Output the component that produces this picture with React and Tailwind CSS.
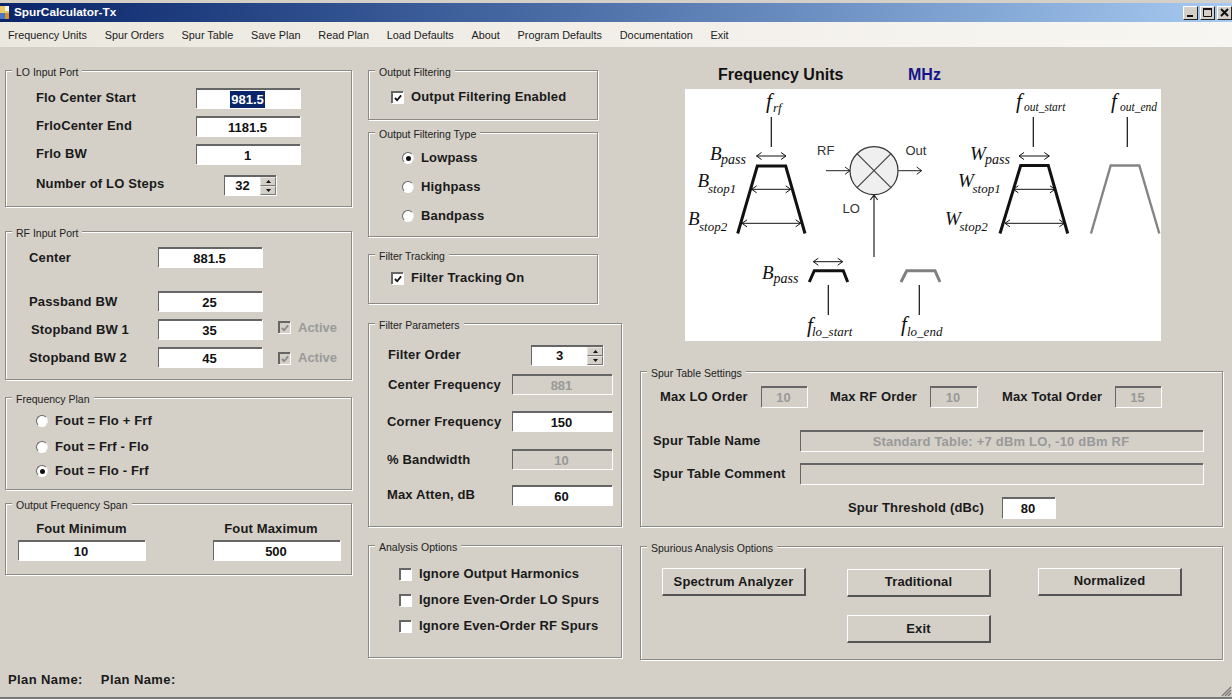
import React from "react";

const Group = ({ title, className = "", children }) => (
  <div className={`relative border border-[#8c8a84] shadow-[1px_1px_0_#fff,inset_1px_1px_0_#fff] ${className}`}>
    <span className="absolute -top-[5px] left-[6px] bg-[#d4d0c8] px-[4px] text-[10.5px] leading-[13px] text-[#222] whitespace-nowrap">{title}</span>
    {children}
  </div>
);

const Field = ({ children, disabled, selected, className = "w-[104px] h-[20px]" }) => (
  <div className={`flex shrink-0 items-center justify-center border-t-2 border-l border-t-[#666] border-l-[#666] pr-[2px] shadow-[1px_1px_0_#fff] text-[13px] font-bold leading-none whitespace-nowrap ${disabled ? "bg-[#d4d0c8] text-[#999]" : "bg-white text-[#111]"} ${className}`}>
    {selected ? <span className="bg-[#0a246a] px-px py-[2px] text-white">{children}</span> : children}
  </div>
);

const Label = ({ children, className = "" }) => (
  <span className={`text-[13px] font-bold leading-[16px] tracking-[0.15px] text-[#1a1a1a] whitespace-nowrap ${className}`}>{children}</span>
);

const Spinner = ({ value, className }) => (
  <div className={`flex shrink-0 h-[20px] items-stretch border-t-2 border-l border-t-[#666] border-l-[#666] bg-white shadow-[1px_1px_0_#fff] ${className}`}>
    <div className="flex flex-1 items-center justify-center text-[13px] font-bold text-[#111]">{value}</div>
    <div className="flex w-[16px] flex-col">
      {[0, 1].map((i) => (
        <div key={i} className="flex flex-1 items-center justify-center border border-[#e8e6e0] border-r-[#777] border-b-[#777] bg-[#d4d0c8]">
          <svg width="5" height="3" viewBox="0 0 5 3">
            <path d={i === 0 ? "M2.5 0L5 3H0Z" : "M0 0H5L2.5 3Z"} fill="#111" />
          </svg>
        </div>
      ))}
    </div>
  </div>
);

const Check = ({ checked, disabled }) => (
  <span className={`flex h-[12px] w-[12px] shrink-0 items-center justify-center border-t-2 border-l-2 border-t-[#666] border-l-[#666] shadow-[1px_1px_0_#fff] ${disabled ? "bg-[#d4d0c8]" : "bg-white"}`}>
    {checked && (
      <svg width="8" height="8" viewBox="0 0 9 9">
        <path d="M1 4.5L3.5 7L8 1.5" fill="none" stroke={disabled ? "#8a8a8a" : "#111"} strokeWidth="2" />
      </svg>
    )}
  </span>
);

const Radio = ({ checked }) => (
  <span className="flex h-[12px] w-[12px] shrink-0 items-center justify-center rounded-full border border-t-[#666] border-l-[#666] border-r-[#eee] border-b-[#fff] bg-white">
    {checked && <span className="h-[5px] w-[5px] rounded-full bg-[#111]" />}
  </span>
);

const Btn = ({ children, className = "" }) => (
  <div className={`flex h-[28px] w-[144px] items-center justify-center border-t border-l border-t-white border-l-white border-r-2 border-b-2 border-r-[#555] border-b-[#555] text-[13px] font-bold tracking-[0.15px] text-[#1a1a1a] ${className}`}>
    {children}
  </div>
);

const Arrow = ({ x1, x2, y }) => (
  <g fill="none" stroke="#111" strokeWidth="1">
    <path d={`M${x1} ${y}H${x2}`} />
    <path d={`M${x1 + 5} ${y - 3.5}L${x1} ${y}L${x1 + 5} ${y + 3.5}`} />
    <path d={`M${x2 - 5} ${y - 3.5}L${x2} ${y}L${x2 - 5} ${y + 3.5}`} />
  </g>
);

const Sym = ({ main, sub, x, y, sx, sy, size = 20, subSize = 14 }) => (
  <g fontFamily="'Liberation Serif', serif" fontStyle="italic" fill="#111">
    <text x={x} y={y} fontSize={size}>{main}</text>
    <text x={sx} y={sy} fontSize={subSize}>{sub}</text>
  </g>
);

const Diagram = () => (
  <svg className="block h-[252px] w-[476px] bg-white" viewBox="685 89 476 252">
    <g fill="none" stroke="#111" strokeLinecap="butt" strokeLinejoin="miter">
      <path d="M737.7 233.5L757.3 166H785.7L805 233.5" strokeWidth="3" />
      <path d="M1000 233.5L1020.7 165.5H1048.3L1067.7 233.5" strokeWidth="3" />
      <path d="M809.3 282L814.3 270.7H843.3L847.7 282" strokeWidth="3" />
      <path d="M771.3 117V147M1033.3 117V147M1127.3 117V147M828.3 285V315M919.3 285V315" strokeWidth="1.2" />
    </g>
    <path d="M901 282L906.7 270.7H935L940 282" fill="none" stroke="#808080" strokeWidth="3" />
    <path d="M1091 233.5L1110.7 165.5H1139.3L1159.3 233.5" fill="none" stroke="#858585" strokeWidth="2.4" />
    <Arrow x1={756.5} x2={786} y={156} />
    <Arrow x1={751.7} x2={790.7} y={189.3} />
    <Arrow x1={742} x2={800.7} y={223.3} />
    <Arrow x1={1019} x2={1049.3} y={156} />
    <Arrow x1={1013.3} x2={1055} y={189.3} />
    <Arrow x1={1005} x2={1064.3} y={223.3} />
    <Arrow x1={813.3} x2={842.7} y={261.7} />
    <circle cx="874" cy="170.7" r="24" fill="#efefef" stroke="#333" strokeWidth="1.2" />
    <path d="M857 153.7L891 187.7M891 153.7L857 187.7" stroke="#444" strokeWidth="1.2" />
    <g fill="none" stroke="#222" strokeWidth="1">
      <path d="M826 170.7H850M845 167L850 170.7L845 174.4" />
      <path d="M898.3 170.7H921.7M916.7 167L921.7 170.7L916.7 174.4" />
      <path d="M874 257V195M870.3 200L874 195L877.7 200" strokeWidth="1.2" />
    </g>
    <g fontFamily="'Liberation Sans', sans-serif" fontSize="13" fill="#333">
      <text x="817" y="155">RF</text>
      <text x="905.5" y="155">Out</text>
      <text x="842.5" y="213">LO</text>
    </g>
    <Sym main="f" sub="rf" x={766} y={108} sx={773} sy={112} size={21} subSize={13} />
    <Sym main="B" sub="pass" x={710} y={159.5} sx={721} sy={163.5} size={19} subSize={14} />
    <Sym main="B" sub="stop1" x={697.5} y={187} sx={708} sy={193} size={19} subSize={13} />
    <Sym main="B" sub="stop2" x={688} y={225} sx={699} sy={231} size={19} subSize={13} />
    <Sym main="B" sub="pass" x={762} y={278.5} sx={773.5} sy={283} size={19} subSize={14} />
    <Sym main="f" sub="lo_start" x={807} y={332} sx={812} sy={336} size={21} subSize={13} />
    <Sym main="f" sub="lo_end" x={901} y={331} sx={907} sy={335.5} size={21} subSize={13} />
    <Sym main="f" sub="out_start" x={1016} y={108} sx={1024} sy={111} size={21} subSize={11.5} />
    <Sym main="f" sub="out_end" x={1111} y={108} sx={1120} sy={111} size={21} subSize={11.5} />
    <Sym main="W" sub="pass" x={970} y={159.5} sx={985} sy={163.5} size={19} subSize={14} />
    <Sym main="W" sub="stop1" x={958} y={187} sx={972.5} sy={192.5} size={19} subSize={13} />
    <Sym main="W" sub="stop2" x={945} y={225} sx={959.5} sy={231} size={19} subSize={13} />
  </svg>
);

const menu = ["Frequency Units", "Spur Orders", "Spur Table", "Save Plan", "Read Plan", "Load Defaults", "About", "Program Defaults", "Documentation", "Exit"];

const WinBtn = ({ children }) => (
  <div className="flex h-[14px] w-[15px] items-center justify-center border-t border-l border-t-white border-l-white border-r border-b border-r-[#222] border-b-[#222] bg-[#d4d0c8]">
    {children}
  </div>
);

export default function App() {
  return (
    <div className="relative flex h-[699px] w-[1232px] flex-col overflow-hidden border-b-2 border-b-[#777] bg-[#d4d0c8] pt-[3px] font-['Liberation_Sans',sans-serif]">
      {/* title bar */}
      <div className="flex h-[19px] shrink-0 items-center bg-gradient-to-r from-[#0a246a] to-[#a6caf0]">
        <svg width="9" height="13" viewBox="0 0 9 13" className="mr-[5px] shrink-0">
          <rect width="9" height="13" fill="#e8c96a" />
          <rect y="7" width="5" height="6" fill="#4a76c8" />
          <rect x="5" y="0" width="4" height="5" fill="#f4f4e8" />
          <rect x="5" y="7" width="4" height="6" fill="#d8902c" />
        </svg>
        <span className="mt-[1px] text-[11.8px] font-bold text-white">SpurCalculator-Tx</span>
        <div className="ml-auto flex gap-[2px]">
          <WinBtn>
            <svg width="9" height="9" viewBox="0 0 9 9"><rect x="1" y="7" width="6" height="2" fill="#111" /></svg>
          </WinBtn>
          <WinBtn>
            <svg width="9" height="9" viewBox="0 0 9 9"><path d="M0.5 1.5H8.5V8.5H0.5Z" fill="none" stroke="#111" /><rect y="0" width="9" height="2" fill="#111" /></svg>
          </WinBtn>
          <WinBtn>
            <svg width="9" height="9" viewBox="0 0 9 9"><path d="M1 1L8 8M8 1L1 8" stroke="#111" strokeWidth="2" /></svg>
          </WinBtn>
        </div>
      </div>
      {/* menu */}
      <div className="flex h-[25px] shrink-0 items-center gap-[17.8px] bg-gradient-to-r from-[#ebe8df] to-[#f8f6f2] pl-[8px] pt-[1px] text-[10.85px] text-[#222]">
        {menu.map((m) => (
          <span key={m} className="whitespace-nowrap">{m}</span>
        ))}
      </div>

      {/* body */}
      <div className="flex pl-[5px] pt-[23px]">
        {/* left */}
        <div className="flex w-[347px] shrink-0 flex-col">
          <Group title="LO Input Port" className="h-[137px] pl-[30px] pt-[17px]">
            {["Flo Center Start", "FrloCenter End", "Frlo BW"].map((l, i) => (
              <div key={l} className="mb-[8px] flex h-[20px] items-center">
                <Label className="w-[160px] -mt-[1px] shrink-0">{l}</Label>
                <Field selected={i === 0}>{["981.5", "1181.5", "1"][i]}</Field>
              </div>
            ))}
            <div className="mt-[11px] flex h-[20px] items-center">
              <Label className="w-[188px] -mt-[3px] shrink-0">Number of LO Steps</Label>
              <Spinner value="32" className="w-[52px]" />
            </div>
          </Group>

          <Group title="RF Input Port" className="mt-[24px] h-[149px] pl-[23px] pt-[15px]">
            <div className="flex h-[20px] items-center">
              <Label className="w-[129px] mt-[1px] shrink-0">Center</Label>
              <Field>881.5</Field>
            </div>
            <div className="mt-[24px] flex h-[20px] items-center">
              <Label className="w-[129px] mt-[1px] shrink-0">Passband BW</Label>
              <Field>25</Field>
            </div>
            <div className="mt-[8px] flex h-[20px] items-center">
              <Label className="w-[129px] mt-[1px] pl-[2px] shrink-0">Stopband BW 1</Label>
              <Field>35</Field>
              <span className="ml-[16px] -mt-[5px]"><Check checked disabled /></span>
              <span className="ml-[8px] -mt-[3px] text-[13px] font-bold text-[#9a9a9a]">Active</span>
            </div>
            <div className="mt-[8px] flex h-[20px] items-center">
              <Label className="w-[129px] mt-[1px] shrink-0">Stopband BW 2</Label>
              <Field>45</Field>
              <span className="ml-[16px] mt-[1px]"><Check checked disabled /></span>
              <span className="ml-[8px] mt-[2px] text-[13px] font-bold text-[#9a9a9a]">Active</span>
            </div>
          </Group>

          <Group title="Frequency Plan" className="mt-[17px] h-[93px] pl-[30px] pt-[11px]">
            {[["Fout = Flo + Frf", false, ""], ["Fout = Frf - Flo", false, "mt-[2px]"], ["Fout = Flo - Frf", true, ""]].map(([l, c, m]) => (
              <div key={l} className={`flex h-[24px] items-center gap-[7px] ${m}`}>
                <Radio checked={c} />
                <Label>{l}</Label>
              </div>
            ))}
          </Group>

          <Group title="Output Frequency Span" className="mt-[13px] flex h-[72px] pl-[12px] pt-[17px]">
            <div className="flex w-[127px] flex-col items-center">
              <Label>Fout Minimum</Label>
              <Field className="mt-[3px] h-[20px] w-[127px]">10</Field>
            </div>
            <div className="ml-[68px] flex w-[127px] flex-col items-center">
              <Label className="mr-[11px]">Fout Maximum</Label>
              <Field className="mt-[3px] h-[20px] w-[127px]">500</Field>
            </div>
          </Group>
        </div>

        {/* middle */}
        <div className="ml-[16px] flex w-[254px] shrink-0 flex-col">
          <Group title="Output Filtering" className="flex h-[50px] w-[230px] items-center pl-[22px] pt-[3px]">
            <Check checked />
            <Label className="ml-[8px]">Output Filtering Enabled</Label>
          </Group>
          <Group title="Output Filtering Type" className="mt-[12px] h-[105px] w-[230px] pl-[33px] pt-[15px]">
            {[["Lowpass", true], ["Highpass", false], ["Bandpass", false]].map(([l, c]) => (
              <div key={l} className="mb-[9px] flex h-[20px] items-center gap-[7px]">
                <Radio checked={c} />
                <Label>{l}</Label>
              </div>
            ))}
          </Group>
          <Group title="Filter Tracking" className="mt-[17px] flex h-[50px] w-[230px] items-center pl-[22px] pb-[2px]">
            <Check checked />
            <Label className="ml-[8px]">Filter Tracking On</Label>
          </Group>
          <Group title="Filter Parameters" className="mt-[19px] h-[204px] w-[254px] pl-[19px] pt-[21px]">
            <div className="flex h-[20px] items-center">
              <Label className="w-[143px] shrink-0">Filter Order</Label>
              <Spinner value="3" className="w-[72px]" />
            </div>
            <div className="mt-[9px] flex h-[20px] items-center">
              <Label className="w-[124px] mt-[1px] shrink-0">Center Frequency</Label>
              <Field disabled className="h-[20px] w-[100px]">881</Field>
            </div>
            <div className="mt-[17px] flex h-[20px] items-center">
              <Label className="-ml-px mt-[1px] w-[125px] shrink-0">Corner Frequency</Label>
              <Field className="h-[20px] w-[100px]">150</Field>
            </div>
            <div className="mt-[18px] flex h-[20px] items-center">
              <Label className="-ml-px mt-[1px] w-[125px] shrink-0">% Bandwidth</Label>
              <Field disabled className="h-[20px] w-[100px]">10</Field>
            </div>
            <div className="mt-[16px] flex h-[20px] items-center">
              <Label className="-ml-px w-[125px] shrink-0">Max Atten, dB</Label>
              <Field className="h-[20px] w-[100px]">60</Field>
            </div>
          </Group>
          <Group title="Analysis Options" className="mt-[18px] h-[113px] w-[254px] pl-[30px] pt-[18px]">
            {["Ignore Output Harmonics", "Ignore Even-Order LO Spurs", "Ignore Even-Order RF Spurs"].map((l) => (
              <div key={l} className="mb-[6px] flex h-[20px] items-center gap-[8px]">
                <Check />
                <Label>{l}</Label>
              </div>
            ))}
          </Group>
        </div>

        {/* right */}
        <div className="ml-[18px] flex w-[583px] shrink-0 flex-col">
          <div className="flex h-[19px] items-start text-[16px] font-bold">
            <span className="ml-[78px] w-[190px] leading-[10px] text-[#111]">Frequency Units</span>
            <span className="leading-[10px] text-[#14148c]">MHz</span>
          </div>
          <div className="ml-[45px]"><Diagram /></div>

          <Group title="Spur Table Settings" className="mt-[30px] h-[156px] pl-[12px] pt-[14px]">
            <div className="flex h-[21px] items-center">
              <Label className="ml-[7px] mt-[1px] w-[101px] shrink-0">Max LO Order</Label>
              <Field disabled className="h-[21px] w-[46px]">10</Field>
              <Label className="ml-[23px] mt-[1px] w-[100px] shrink-0">Max RF Order</Label>
              <Field disabled className="h-[21px] w-[47px]">10</Field>
              <Label className="ml-[25px] mt-[1px] w-[113px] shrink-0">Max Total Order</Label>
              <Field disabled className="h-[21px] w-[46px]">15</Field>
            </div>
            <div className="mt-[23px] flex h-[21px] items-center">
              <Label className="w-[147px] shrink-0">Spur Table Name</Label>
              <Field disabled className="h-[21px] w-[403px]"><span className="tracking-[0.2px]">Standard Table: +7 dBm LO, -10 dBm RF</span></Field>
            </div>
            <div className="mt-[12px] flex h-[21px] items-center">
              <Label className="w-[147px] shrink-0">Spur Table Comment</Label>
              <Field disabled className="h-[21px] w-[403px]"></Field>
            </div>
            <div className="mt-[13px] flex h-[21px] items-center">
              <Label className="ml-[195px] mt-[1px] w-[154px] shrink-0">Spur Threshold (dBc)</Label>
              <Field className="h-[21px] w-[53px]">80</Field>
            </div>
          </Group>

          <Group title="Spurious Analysis Options" className="mt-[19px] h-[114px] pl-[21px] pt-[21px]">
            <div className="flex h-[28px] items-start">
              <Btn>Spectrum Analyzer</Btn>
              <Btn className="ml-[41px] mt-[1px] h-[27px] pb-[1px]">Traditional</Btn>
              <Btn className="ml-[47px] pb-[2px]">Normalized</Btn>
            </div>
            <Btn className="ml-[185px] mt-[19px] h-[27px]">Exit</Btn>
          </Group>
        </div>
      </div>

      {/* status */}
      <div className="absolute left-[8px] top-[672px] flex gap-[18px] text-[13px] font-bold leading-[16px] tracking-[0.4px] text-[#1a1a1a]">
        <span>Plan Name:</span>
        <span>Plan Name:</span>
      </div>
      <svg className="absolute bottom-0 right-0" width="12" height="12" viewBox="0 0 12 12">
        <path d="M11 2L2 11M11 5L5 11M11 8L8 11" stroke="#777" strokeWidth="1.2" />
      </svg>
    </div>
  );
}
